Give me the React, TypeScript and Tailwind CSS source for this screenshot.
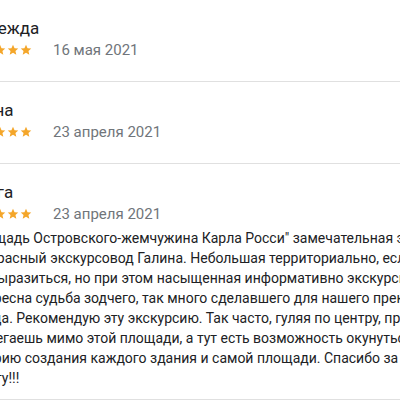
interface Review {
  name: string;
  date: string;
  lines?: string[];
}

const reviews: Review[] = [
  { name: "Надежда", date: "16 мая 2021" },
  { name: "Елена", date: "23 апреля 2021" },
  {
    name: "Ольга",
    date: "23 апреля 2021",
    lines: [
      "\"Площадь Островского-жемчужина Карла Росси\" замечательная экскурсия.",
      "Прекрасный экскурсовод Галина. Небольшая территориально, если можно",
      "так выразиться, но при этом насыщенная информативно экскурсия. Очень",
      "интересна судьба зодчего, так много сделавшего для нашего прекрасного",
      "города. Рекомендую эту экскурсию. Так часто, гуляя по центру, просто",
      "пробегаешь мимо этой площади, а тут есть возможность окунуться в",
      "историю создания каждого здания и самой площади. Спасибо за",
      "работу!!!",
    ],
  },
];

const Stars = () => (
  <div className="ml-[2px] flex items-center gap-[1px]">
    {[0, 1, 2, 3, 4].map((i) => (
      <svg key={i} viewBox="0 0 24 24" className="h-[12px] w-[12px]">
        <path
          d="M12 1.5l3.1 6.9 7.4.7-5.6 5 1.7 7.4L12 17.6l-6.6 3.9 1.7-7.4-5.6-5 7.4-.7z"
          fill="#f4a62a"
        />
      </svg>
    ))}
  </div>
);

export default function App() {
  return (
    <div className="h-[400px] w-[400px] overflow-hidden bg-white font-['Roboto',sans-serif]">
      <div className="-ml-[34px] w-[480px]">
        {reviews.map((review, index) => (
          <div
            key={review.name}
            className={
              index === 0
                ? "pt-[16px] pb-[21px]"
                : index === reviews.length - 1
                  ? "border-t border-[#e0e0e0] pt-[16px] pb-[11px]"
                  : "border-t border-[#e0e0e0] pt-[16px] pb-[21px]"
            }
          >
            <p className="text-[17px] leading-[24px] text-[#202124]">{review.name}</p>
            <div className="flex items-center">
              <Stars />
              <span className="ml-[21px] text-[15px] leading-[20px] text-[#70757a]">{review.date}</span>
            </div>
            {review.lines ? (
              <div className="mt-[4px] -ml-[2px] text-[14px] leading-[20px] text-[#202124]">
                {review.lines.map((line) => (
                  <p key={line} className="whitespace-nowrap">
                    {line}
                  </p>
                ))}
              </div>
            ) : null}
          </div>
        ))}
        <div className="border-t border-[#e0e0e0]" />
      </div>
    </div>
  );
}
